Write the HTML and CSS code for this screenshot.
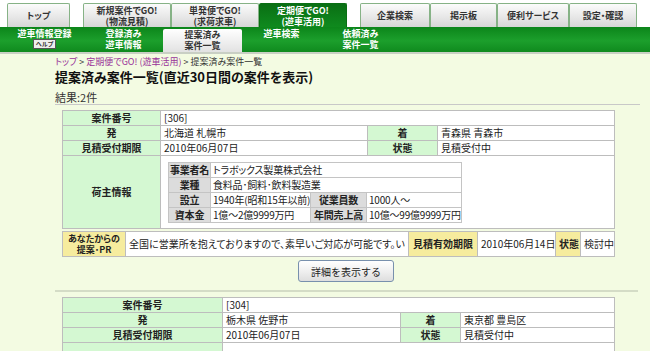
FILE: index.html
```html
<!DOCTYPE html>
<html lang="ja">
<head>
  <meta charset="UTF-8">
  <title>提案済み案件一覧</title>
  <link rel="stylesheet" href="styles.css">
</head>
<body>
  <div class="header">
    <div class="tabs">
      <a class="tab tab-top">トップ</a>
      <div class="tab-group">
        <a class="tab tab-go">新規案件でGO!<br>(物流見積)</a>
        <a class="tab tab-go">単発便でGO!<br>(求荷求車)</a>
        <a class="tab tab-go active">定期便でGO!<br>(遊車活用)</a>
      </div>
      <div class="tab-group">
        <a class="tab tab-s1">企業検索</a>
        <a class="tab tab-s2">掲示板</a>
        <a class="tab tab-s3">便利サービス</a>
        <a class="tab tab-s4">設定・確認</a>
      </div>
    </div>
    <div class="subnav">
      <div class="sub-item">遊車情報登録<br><span class="help">ヘルプ</span></div>
      <div class="sub-item">登録済み<br>遊車情報</div>
      <div class="sub-item active">提案済み<br>案件一覧</div>
      <div class="sub-item">遊車検索</div>
      <div class="sub-item">依頼済み<br>案件一覧</div>
    </div>
  </div>

  <div class="main">
    <div class="crumbs"><a>トップ</a> &gt; <a>定期便でGO! (遊車活用)</a> &gt; 提案済み案件一覧</div>
    <h1>提案済み案件一覧(直近30日間の案件を表示)</h1>
    <h2 class="result">結果:2件</h2>

    <div class="case">
      <table class="info">
        <colgroup>
          <col style="width: 98px">
          <col style="width: 207px">
          <col style="width: 70px">
          <col>
        </colgroup>
        <tr>
          <th>案件番号</th>
          <td colspan="3">[306]</td>
        </tr>
        <tr>
          <th>発</th>
          <td>北海道 札幌市</td>
          <th>着</th>
          <td>青森県 青森市</td>
        </tr>
        <tr>
          <th>見積受付期限</th>
          <td>2010年06月07日</td>
          <th>状態</th>
          <td>見積受付中</td>
        </tr>
        <tr>
          <th>荷主情報</th>
          <td colspan="3" class="owner-cell">
            <table class="owner">
              <colgroup>
                <col class="o1">
                <col class="o2">
                <col class="o3">
                <col>
              </colgroup>
              <tr>
                <th>事業者名</th>
                <td colspan="3">トラボックス製菓株式会社</td>
              </tr>
              <tr>
                <th>業種</th>
                <td colspan="3">食料品･飼料･飲料製造業</td>
              </tr>
              <tr>
                <th>設立</th>
                <td>1940年(昭和15年以前)</td>
                <th>従業員数</th>
                <td>1000人～</td>
              </tr>
              <tr>
                <th>資本金</th>
                <td>1億～2億9999万円</td>
                <th>年間売上高</th>
                <td>10億～99億9999万円</td>
              </tr>
            </table>
          </td>
        </tr>
      </table>

      <table class="pr">
        <colgroup>
          <col class="p1">
          <col class="p2">
          <col class="p3">
          <col class="p4">
          <col class="p5">
          <col>
        </colgroup>
        <tr>
          <th class="pr-head">あなたからの<br>提案･PR</th>
          <td>全国に営業所を抱えておりますので、素早いご対応が可能です。い</td>
          <th>見積有効期限</th>
          <td>2010年06月14日</td>
          <th>状態</th>
          <td>検討中</td>
        </tr>
      </table>

      <div class="actions">
        <button type="button">詳細を表示する</button>
      </div>
    </div>

    <div class="case">
      <table class="info">
        <colgroup>
          <col style="width: 160px">
          <col style="width: 178px">
          <col style="width: 60px">
          <col>
        </colgroup>
        <tr>
          <th>案件番号</th>
          <td colspan="3">[304]</td>
        </tr>
        <tr>
          <th>発</th>
          <td>栃木県 佐野市</td>
          <th>着</th>
          <td>東京都 豊島区</td>
        </tr>
        <tr>
          <th>見積受付期限</th>
          <td>2010年06月07日</td>
          <th>状態</th>
          <td>見積受付中</td>
        </tr>
        <tr>
          <th>荷主情報</th>
          <td colspan="3" class="owner-cell owner-empty"></td>
        </tr>
      </table>
    </div>
  </div>
</body>
</html>
```

FILE: styles.css
```css
body {
  margin: 0;
  background-color: #f3fbe2;
  font-family: "Noto Sans CJK JP", "Noto Sans", sans-serif;
  font-size: 10px;
  font-feature-settings: "palt";
  color: #222;
}
a {
  text-decoration: none;
}

/* header */
.header {
  background-color: #fff;
}
.tabs {
  display: flex;
  height: 24px;
  padding: 3px 0 0 7px;
}
.tab {
  display: flex;
  align-items: center;
  justify-content: center;
  text-align: center;
  box-sizing: border-box;
  height: 24px;
  font-size: 9px;
  font-weight: bold;
  line-height: 11px;
  color: #333;
  background: linear-gradient(#fbfbfb, #e6e6e6 60%, #d6d6d6);
  border: 1px solid #86b286;
  border-bottom: none;
  border-radius: 2px 2px 0 0;
}
.tab-top {
  width: 71px;
  margin-right: 13px;
}
.tab-group {
  display: flex;
  margin-right: 13px;
}
.tab-go {
  width: 88px;
}
.tab-s1 { width: 70px; }
.tab-s2 { width: 67px; }
.tab-s3 { width: 72px; }
.tab-s4 { width: 68px; }
.tab.active {
  color: #fff;
  background: linear-gradient(#0a6f14, #0f8a1e);
  border-color: #0a6f14;
}

.subnav {
  display: flex;
  height: 25px;
  padding-left: 5px;
  background: linear-gradient(#0c851a, #1c9f2c 55%, #0f8a1e);
  border-bottom: 2px solid #c9cfc4;
}
.sub-item {
  width: 79px;
  padding-top: 1px;
  text-align: center;
  font-size: 9px;
  font-weight: bold;
  line-height: 11px;
  color: #fff;
}
.sub-item.active {
  box-sizing: border-box;
  height: 23px;
  margin-top: 2px;
  padding-top: 0;
  color: #333;
  background: linear-gradient(#ffffff, #e2e2e2);
  border-radius: 2px 2px 0 0;
}
.help {
  display: inline-block;
  padding: 0 2px;
  font-size: 6px;
  line-height: 8px;
  color: #333;
  background-color: #eee;
  border: 1px solid #555;
  vertical-align: top;
}

/* main */
.main {
  width: 585px;
  padding-left: 55px;
}
.crumbs {
  margin-top: 2px;
  font-size: 9px;
  line-height: 12px;
  color: #333;
}
.crumbs a {
  color: #993399;
}
h1 {
  margin: 0;
  font-size: 13px;
  line-height: 17px;
  font-weight: bold;
  color: #111;
}
.result {
  margin: 5px 0 0;
  height: 14px;
  font-size: 11px;
  font-weight: normal;
  line-height: 14px;
  color: #333;
  border-bottom: 1px solid #c8c8c8;
}

.case {
  margin-right: 2px;
  padding: 5px 0 8px 7px;
  border-bottom: 2px solid #d4dcc6;
}
.case:last-child {
  border-bottom: none;
}

table {
  border-collapse: collapse;
  table-layout: fixed;
  background-color: #fff;
}
.info,
.pr {
  width: 553px;
}
th,
td {
  height: 12px;
  padding: 1px 3px;
  border: 1px solid #bdbdbd;
  line-height: 12px;
  white-space: nowrap;
  overflow: hidden;
}
th {
  font-weight: bold;
  text-align: center;
}
td {
  text-align: left;
}
.info th {
  background-color: #d4f8d2;
}

.info td.owner-cell {
  padding: 6px 8px 5px 7px;
}
.info td.owner-empty {
  height: 60px;
}
.owner {
  width: 294px;
}
.owner th,
.owner td {
  padding: 1px 2px;
  border-color: #c4c4c4;
  letter-spacing: -0.2px;
}
.owner th {
  padding: 1px 0;
  background-color: #dcdcdc;
}
.o1 { width: 42px; }
.o2 { width: 100px; }
.o3 { width: 56px; }

.pr {
  margin-top: 2px;
}
.pr th {
  background-color: #f6ec9e;
}
.pr th,
.pr td {
  height: 22px;
}
.pr .pr-head {
  padding: 1px 2px;
  font-size: 9px;
  line-height: 11px;
}
.p1 { width: 63px; }
.p2 { width: 283px; }
.p3 { width: 69px; }
.p4 { width: 78px; }
.p5 { width: 25px; }

.actions {
  display: flex;
  justify-content: center;
  padding: 3px 8px 0 0;
}
button {
  width: 96px;
  height: 22px;
  font-family: inherit;
  font-size: 10px;
  color: #222;
  background: linear-gradient(#ffffff, #f0f0f0 50%, #dedede);
  border: 1px solid #7890ad;
  border-radius: 3px;
  cursor: pointer;
}
```
